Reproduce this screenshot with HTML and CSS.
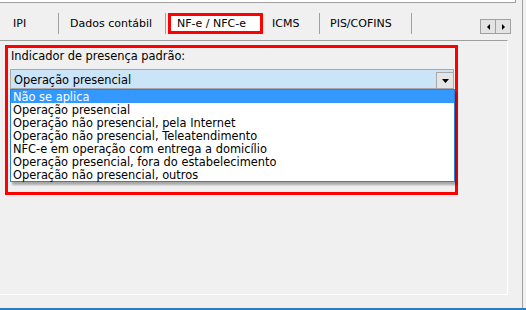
FILE: index.html
```html
<!DOCTYPE html>
<html lang="pt-BR">
<head>
    <meta charset="UTF-8">
    <meta name="viewport" content="width=device-width, initial-scale=1.0">
    <title>Configurações - NF-e / NFC-e</title>
    <link rel="stylesheet" href="styles.css">
</head>
<body>
    <div class="window">
        <div class="top-edge"></div>

        <div class="tabs">
            <div class="tab tab-ipi">IPI</div>
            <div class="tab tab-dados">Dados contábil</div>
            <div class="tab tab-nfe active">NF-e / NFC-e</div>
            <div class="tab tab-icms">ICMS</div>
            <div class="tab tab-pis">PIS/COFINS</div>
            <div class="scroll-btns">
                <span class="scroll-btn"><span class="arrow-left"></span></span>
                <span class="scroll-btn"><span class="arrow-right"></span></span>
            </div>
        </div>

        <div class="panel">
            <div class="group">
                <div class="field-label">Indicador de presença padrão:</div>
                <div class="combo">
                    <span class="combo-value">Operação presencial</span>
                    <span class="combo-btn">
                        <svg width="7" height="4" viewBox="0 0 7 4"><polygon points="0,0 7,0 3.5,4" fill="#000"/></svg>
                    </span>
                </div>
                <ul class="combo-list">
                    <li class="selected">Não se aplica</li>
                    <li>Operação presencial</li>
                    <li>Operação não presencial, pela Internet</li>
                    <li>Operação não presencial, Teleatendimento</li>
                    <li>NFC-e em operação com entrega a domicílio</li>
                    <li>Operação presencial, fora do estabelecimento</li>
                    <li>Operação não presencial, outros</li>
                </ul>
            </div>
        </div>
    </div>
    <div class="status-line"></div>
</body>
</html>
```

FILE: styles.css
```css
* {
    margin: 0;
    padding: 0;
    box-sizing: border-box;
    font-family: "DejaVu Sans", Verdana, sans-serif;
}

body {
    background-color: #f0f0f0;
    color: #000;
    font-size: 11px;
    width: 526px;
    height: 310px;
    overflow: hidden;
}

.window {
    width: 523px;
    height: 308px;
    border-right: 1px solid #a0a0a0;
}

.top-edge {
    width: 516px;
    height: 3px;
    background-color: #fff;
    border-bottom: 1px solid #a0a0a0;
    border-right: 1px solid #a0a0a0;
}

.tabs {
    display: flex;
    width: 511px;
    height: 21px;
    margin-top: 10px;
}

.tab {
    display: flex;
    align-items: center;
    height: 21px;
    border-right: 1px solid #a0a0a0;
    white-space: nowrap;
}

.tab-ipi {
    width: 59px;
    padding-left: 13px;
}

.tab-dados {
    width: 107px;
    padding-left: 11px;
}

.tab-nfe {
    width: 95px;
    margin-left: 2px;
    padding-left: 6px;
}

.tab.active {
    border: 3px solid #ff0000;
    background-color: #fff;
}

.tab-icms {
    width: 57px;
    padding-left: 9px;
}

.tab-pis {
    width: 92px;
    padding-left: 10px;
}

.scroll-btns {
    display: flex;
    margin-left: auto;
    align-self: flex-end;
}

.scroll-btn {
    display: flex;
    align-items: center;
    justify-content: center;
    width: 16px;
    height: 15px;
    border: 1px solid #a0a0a0;
    background-color: #e3e3e3;
}

.scroll-btn + .scroll-btn {
    margin-left: -1px;
}

.arrow-left {
    width: 0;
    height: 0;
    border-top: 3px solid transparent;
    border-bottom: 3px solid transparent;
    border-right: 3px solid #000;
}

.arrow-right {
    width: 0;
    height: 0;
    border-top: 3px solid transparent;
    border-bottom: 3px solid transparent;
    border-left: 3px solid #000;
}

.panel {
    width: 508px;
    height: 255px;
    margin-top: 6px;
    border-top: 1px solid #a0a0a0;
    border-right: 1px solid #fff;
    border-bottom: 1px solid #fff;
    padding-top: 4px;
}

.group {
    width: 453px;
    height: 150px;
    margin-left: 5px;
    border: 3px solid #ff0000;
    font-size: 11.4px;
}

.field-label {
    margin-top: 2px;
    padding-left: 3px;
    line-height: 13px;
    white-space: nowrap;
}

.combo {
    display: flex;
    width: 444px;
    height: 20px;
    margin: 6px 0 0 2px;
    border: 1px solid #a8a8a8;
    background-color: #cce4f7;
}

.combo-value {
    flex: 1;
    padding: 1px 0 0 3px;
    line-height: 18px;
    white-space: nowrap;
}

.combo-btn {
    display: flex;
    align-items: center;
    justify-content: center;
    align-self: flex-end;
    width: 17px;
    height: 16px;
    border-left: 1px solid #a8a8a8;
    border-top: 1px solid #a8a8a8;
    background-color: #e5e5e5;
}

.combo-list {
    list-style: none;
    width: 445px;
    margin-left: 2px;
    border: 1px solid #2184e0;
    background-color: #fff;
    box-shadow: 2px 3px 2px rgba(0,0,0,0.3);
}

.combo-list li {
    height: 13px;
    line-height: 14px;
    padding-left: 2px;
    white-space: nowrap;
}

.combo-list li.selected {
    background-color: #3399ff;
    color: #fff;
}

.status-line {
    height: 2px;
    background-color: #2d7dc1;
}
```
